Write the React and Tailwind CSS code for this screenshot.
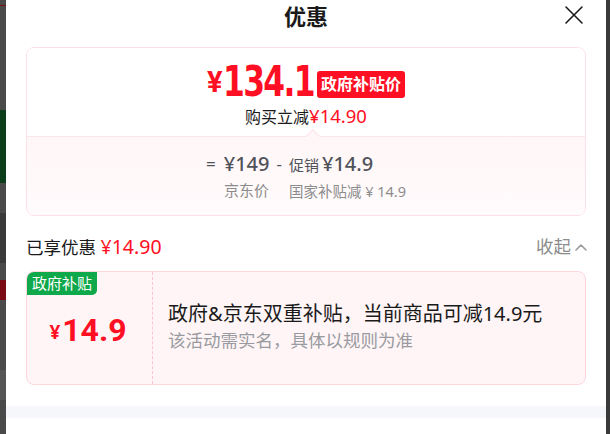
import React from 'react';

const RED = 'text-[#ff0f23]';

function BackdropStrip() {
  // the page behind the sheet, dimmed by the overlay
  return (
    <div className="w-[6px] shrink-0 flex flex-col bg-[#4a4a4a]">
      <div className="h-[5px]" />
      <div className="h-[1px] bg-[#7a1010]" />
      <div className="h-[104px]" />
      <div className="h-[73px] bg-[#0b3d1a]" />
      <div className="h-[30px]" />
      <div className="h-[50px] bg-[#3a3a3a]" />
      <div className="h-[17px]" />
      <div className="h-[20px] bg-[#7a0b14]" />
      <div className="h-[70px]" />
      <div className="h-[30px] bg-[#555]" />
      <div className="flex-1" />
    </div>
  );
}

function Close() {
  return (
    <svg width="20" height="20" viewBox="0 0 20 20" fill="none" stroke="#1a1a1a" strokeWidth="1.6" strokeLinecap="round">
      <path d="M2 2 L18 18 M18 2 L2 18" />
    </svg>
  );
}

function ChevronUp() {
  return (
    <svg width="12" height="8" viewBox="0 0 12 8" fill="none" stroke="#9a9a9a" strokeWidth="1.6" strokeLinecap="round" strokeLinejoin="round">
      <path d="M1 7 L6 2 L11 7" />
    </svg>
  );
}

function PriceCard() {
  return (
    <div className="mx-5 mt-[15px] rounded-[8px] border border-[#fde1e7] overflow-hidden">
      <div className="h-[88px] flex flex-col items-center bg-white">
        <div className="flex items-end mt-[17px] h-[33px]">
          <span className={`${RED} text-[29px] font-bold leading-none mb-[1px] font-['Roboto']`}>¥</span>
          <span className={`${RED} text-[42px] font-bold leading-[33px] tracking-[-2px] font-['DejaVu_Sans_Condensed','Roboto',sans-serif] scale-x-[0.83] origin-left inline-block -mr-[18px]`}>134.1</span>
          <span className="ml-[3px] h-[27px] px-[4px] rounded-[3px] bg-[#ff0f23] text-white text-[16px] font-bold leading-[27px]">政府补贴价</span>
        </div>
        <div className="mt-[8px] text-[16px] leading-[20px] text-[#1a1a1a]">
          购买立减<span className={`${RED} text-[18.5px]`}>¥14.90</span>
        </div>
      </div>
      <div className="relative h-[79px] border-t border-[#fde6ea] bg-gradient-to-b from-[#fff6f7] to-[#fffbfc] flex justify-center">
        <div className="absolute -top-[6px] left-[281px] w-[10px] h-[10px] rotate-45 bg-[#fff6f7] border-l border-t border-[#fde6ea]" />
        <div className="flex items-start mt-[14px] text-[#505259]">
          <span className="text-[17px] leading-[26px] mr-[8px]">=</span>
          <div className="flex flex-col items-center">
            <span className="text-[20px] leading-[26px] font-medium">¥149</span>
            <span className="mt-[4px] text-[15px] leading-[18px] text-[#8c8c8c]">京东价</span>
          </div>
          <span className="text-[17px] leading-[26px] mx-[7px]">-</span>
          <div className="flex flex-col items-start">
            <span className="leading-[26px]">
              <span className="text-[15px]">促销</span>
              <span className="text-[20px] font-medium ml-[3px]">¥14.9</span>
            </span>
            <span className="mt-[4px] text-[14.5px] leading-[18px] text-[#8c8c8c] whitespace-pre">国家补贴减 ¥ 14.9</span>
          </div>
        </div>
      </div>
    </div>
  );
}

function CouponCard() {
  return (
    <div className="mx-5 mt-[14px] h-[114px] rounded-[8px] border border-[#fed6dc] bg-[#fff5f6] flex overflow-hidden">
      <div className="w-[126px] shrink-0 flex flex-col border-r border-dashed border-[#fcc4cf]">
        <span className="self-start h-[23px] px-[5px] bg-[#0fa84a] text-white text-[15px] leading-[23px] rounded-br-[5px]">政府补贴</span>
        <div className="flex items-end justify-center mt-[19px] pr-[3px]">
          <span className={`${RED} text-[19px] font-bold leading-none mb-[4px] mr-[2px]`}>¥</span>
          <span className={`${RED} text-[32px] font-bold leading-none font-['Roboto']`}>14.9</span>
        </div>
      </div>
      <div className="flex flex-col justify-center pl-[15px] pb-[2px]">
        <span className="text-[20px] leading-[26px] text-[#1a1a1a]">政府&amp;京东双重补贴，当前商品可减14.9元</span>
        <span className="text-[17.5px] leading-[26px] text-[#999aa0]">该活动需实名，具体以规则为准</span>
      </div>
    </div>
  );
}

export default function App() {
  return (
    <div className="w-[610px] h-[434px] overflow-hidden flex font-['Noto_Sans','Noto_Sans_CJK_SC',sans-serif]">
      <BackdropStrip />
      <div className="w-[600px] shrink-0 bg-white flex flex-col">
        <div className="relative h-[31px] flex items-center justify-center">
          <span className="text-[22px] font-bold text-[#1a1a1a] leading-none">优惠</span>
          <div className="absolute right-[22px] top-[5px]">
            <Close />
          </div>
        </div>
        <div className="h-[1px]" />
        <PriceCard />
        <div className="mx-5 mt-[20px] h-[21px] flex items-center justify-between">
          <span className="text-[17.5px] text-[#1a1a1a] leading-none">
            已享优惠 <span className={`${RED} text-[19.5px]`}>¥14.90</span>
          </span>
          <span className="flex items-center gap-[4px] text-[17.5px] text-[#8c8c8c] leading-none -mr-[1px]">
            收起
            <ChevronUp />
          </span>
        </div>
        <CouponCard />
        <div className="mt-[21px] h-[12px] bg-[#f6f7fa]" />
        <div className="flex-1 bg-white" />
      </div>
      <div className="flex-1 bg-[#3a3a3a]" />
    </div>
  );
}
